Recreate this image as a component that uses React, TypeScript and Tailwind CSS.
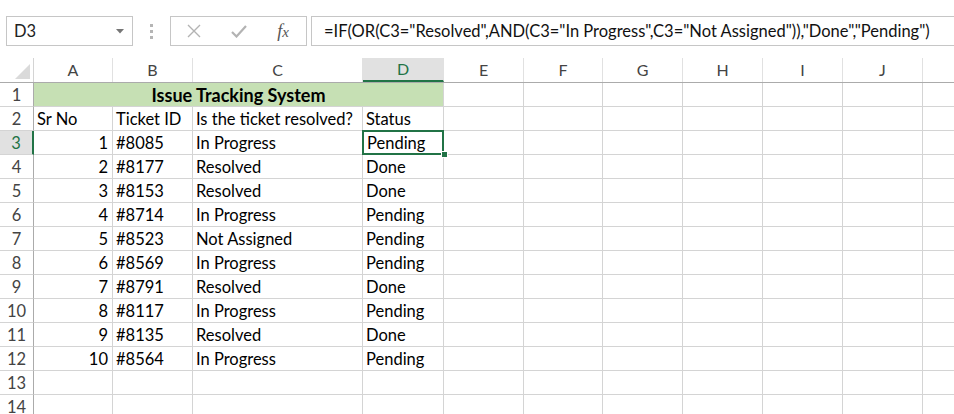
const cols = [
  { key: 'A', w: 79 },
  { key: 'B', w: 80 },
  { key: 'C', w: 170 },
  { key: 'D', w: 81 },
  { key: 'E', w: 80 },
  { key: 'F', w: 79 },
  { key: 'G', w: 80 },
  { key: 'H', w: 80 },
  { key: 'I', w: 80 },
  { key: 'J', w: 80 },
  { key: '', w: 40 },
];

const tickets = [
  [1, '#8085', 'In Progress', 'Pending'],
  [2, '#8177', 'Resolved', 'Done'],
  [3, '#8153', 'Resolved', 'Done'],
  [4, '#8714', 'In Progress', 'Pending'],
  [5, '#8523', 'Not Assigned', 'Pending'],
  [6, '#8569', 'In Progress', 'Pending'],
  [7, '#8791', 'Resolved', 'Done'],
  [8, '#8117', 'In Progress', 'Pending'],
  [9, '#8135', 'Resolved', 'Done'],
  [10, '#8564', 'In Progress', 'Pending'],
];

const font = { fontFamily: 'Lato, "Noto Sans", sans-serif' };

function RowHead({ n, active }: { n: number; active?: boolean }) {
  return (
    <div
      className={`w-[34px] shrink-0 h-full flex items-center justify-center pt-[1px] border-b border-[#d4d4d4] ${
        active ? 'bg-[#e1e1e1] text-[#217346] border-r-2 border-r-[#217346]' : 'text-[#444] border-r border-r-[#ababab]'
      }`}
    >
      {n}
    </div>
  );
}

function Cell({ w, children, right, className = '' }: { w: number; children?: React.ReactNode; right?: boolean; className?: string }) {
  return (
    <div
      style={{ width: w }}
      className={`shrink-0 h-full border-r border-b border-[#d4d4d4] flex items-center pt-[2px] px-[3px] whitespace-nowrap overflow-visible ${
        right ? 'justify-end pr-[4px]' : ''
      } ${className}`}
    >
      {children}
    </div>
  );
}

function EmptyCells({ from }: { from: number }) {
  return (
    <>
      {cols.slice(from).map((c, i) => (
        <Cell key={i} w={c.w} />
      ))}
    </>
  );
}

export default function App() {
  return (
    <div className="w-[954px] h-[414px] overflow-hidden bg-white text-[16.5px] text-black" style={font}>
      {/* formula bar */}
      <div className="h-[58px] flex items-start pt-[16px]">
        <div className="ml-[6px] w-[127px] h-[30px] border border-[#c6c6c6] flex items-center justify-between pl-[7px] pr-[8px] text-[#222]">
          <span>D3</span>
          <svg width="8" height="5" viewBox="0 0 8 5">
            <path d="M0 0h8L4 4.5z" fill="#767676" />
          </svg>
        </div>
        <div className="w-[37px] h-[30px] flex flex-col items-center justify-center gap-[3px]">
          <div className="w-[3px] h-[3px] bg-[#b5b5b5]" />
          <div className="w-[3px] h-[3px] bg-[#b5b5b5]" />
          <div className="w-[3px] h-[3px] bg-[#b5b5b5]" />
        </div>
        <div className="w-[137px] h-[30px] border border-[#c6c6c6] flex items-center">
          <div className="w-[46px] flex justify-center">
            <svg width="14" height="14" viewBox="0 0 14 14">
              <path d="M1 1l12 12M13 1L1 13" stroke="#b3b3b3" strokeWidth="1.4" />
            </svg>
          </div>
          <div className="w-[44px] flex justify-center">
            <svg width="16" height="13" viewBox="0 0 16 13">
              <path d="M1 7l4.5 4.5L15 1" stroke="#b3b3b3" strokeWidth="2.2" fill="none" />
            </svg>
          </div>
          <div className="w-[44px] flex justify-center">
            <span className="italic text-[18px] text-[#555]" style={{ fontFamily: '"Liberation Serif", serif' }}>
              f<span className="text-[15px]">x</span>
            </span>
          </div>
        </div>
        <div className="ml-[4px] flex-1 h-[30px] border border-r-0 border-[#c6c6c6] flex items-center pl-[12px] whitespace-nowrap text-[#111]">
          =IF(OR(C3="Resolved",AND(C3="In Progress",C3="Not Assigned")),"Done","Pending")
        </div>
      </div>

      {/* column headers */}
      <div className="flex h-[25px] border-b border-[#ababab] text-[16px]">
        <div className="w-[34px] shrink-0 h-full border-r border-[#d4d4d4] relative">
          <svg className="absolute right-[3px] bottom-[3px]" width="15" height="15" viewBox="0 0 15 15">
            <path d="M15 0v15H0z" fill="#dadada" />
          </svg>
        </div>
        {cols.map((c) => (
          <div
            key={c.key}
            style={{ width: c.w }}
            className={`shrink-0 h-full flex items-center justify-center border-r border-[#e1e1e1] ${
              c.key === 'D' ? 'bg-[#e1e1e1] text-[#217346] border-b-2 border-b-[#217346]' : 'text-[#444]'
            }`}
          >
            {c.key}
          </div>
        ))}
      </div>

      {/* row 1 */}
      <div className="flex h-[24px]">
        <RowHead n={1} />
        <div className="w-[410px] shrink-0 h-full bg-[#c6e0b4] border-r border-b border-[#d4d4d4] flex items-center justify-center pt-[2px] font-bold text-[18px]">
          Issue Tracking System
        </div>
        <EmptyCells from={4} />
      </div>

      {/* row 2 */}
      <div className="flex h-[24px]">
        <RowHead n={2} />
        <Cell w={79}>Sr No</Cell>
        <Cell w={80}>Ticket ID</Cell>
        <Cell w={170}>Is the ticket resolved?</Cell>
        <Cell w={81}>Status</Cell>
        <EmptyCells from={4} />
      </div>

      {tickets.map((t, i) => (
        <div key={i} className="flex h-[24px]">
          <RowHead n={i + 3} active={i === 0} />
          <Cell w={79} right>
            {t[0]}
          </Cell>
          <Cell w={80}>{t[1]}</Cell>
          <Cell w={170}>{t[2]}</Cell>
          {i === 0 ? (
            <div className="w-[81px] shrink-0 h-full relative border-b border-[#d4d4d4]">
              <div className="absolute left-[-1px] top-[-1px] w-[82px] h-[25px] border-2 border-[#217346] flex items-center pt-[2px] pl-[3px]">
                {t[3]}
              </div>
              <div className="absolute right-[-4px] bottom-[-4px] w-[7px] h-[7px] bg-[#217346] border border-white z-10" />
            </div>
          ) : (
            <Cell w={81}>{t[3]}</Cell>
          )}
          <EmptyCells from={4} />
        </div>
      ))}

      {[13, 14].map((n) => (
        <div key={n} className="flex h-[24px]">
          <RowHead n={n} />
          <EmptyCells from={0} />
        </div>
      ))}
    </div>
  );
}
